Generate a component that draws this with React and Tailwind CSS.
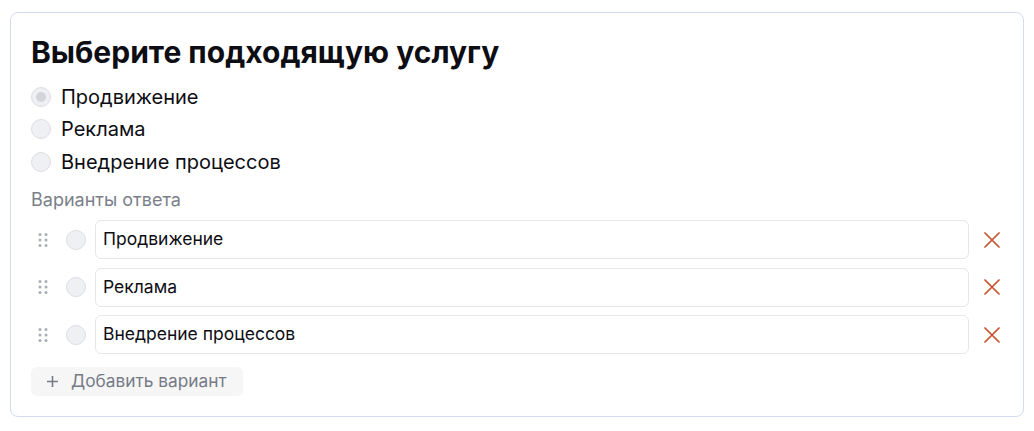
const options = ['Продвижение', 'Реклама', 'Внедрение процессов'];

const DragHandle = () => (
  <svg width="10" height="16" viewBox="0 0 10 16" className="text-[#a9adb5]" fill="currentColor">
    <circle cx="2" cy="2.5" r="1.5" />
    <circle cx="8" cy="2.5" r="1.5" />
    <circle cx="2" cy="8" r="1.5" />
    <circle cx="8" cy="8" r="1.5" />
    <circle cx="2" cy="13.5" r="1.5" />
    <circle cx="8" cy="13.5" r="1.5" />
  </svg>
);

const Radio = ({ checked }) => (
  <span className="w-5 h-5 rounded-full border border-[#dcdee3] bg-[#eff0f3] flex items-center justify-center shrink-0">
    {checked && <span className="w-[10px] h-[10px] rounded-full bg-[#d3d5db]" />}
  </span>
);

export default function App() {
  return (
    <div className="min-h-screen bg-white p-[10px] pt-[12px] font-['Inter',sans-serif]">
      <div className="border border-[#d5dbf3] rounded-lg px-5 pt-[21px] pb-5">
        {/* Title */}
        <h2 className="text-[30px] leading-[36px] font-bold text-[#0d0d14]">
          Выберите подходящую услугу
        </h2>

        {/* Preview */}
        <div className="mt-[10.5px] flex flex-col">
          {options.map((o, i) => (
            <label key={o} className="flex items-center gap-[10px] h-[32.5px] text-[20px] leading-[32.5px] text-[#0d0d14]">
              <Radio checked={i === 0} />
              {o}
            </label>
          ))}
        </div>

        {/* Editor */}
        <div className="mt-[11.5px] text-[18px] leading-5 text-[#7b7f8a]">Варианты ответа</div>
        <div className="mt-[10.5px] flex flex-col gap-[8.5px]">
          {options.map((o) => (
            <div key={o} className="flex items-center">
              <span className="w-6 flex justify-center">
                <DragHandle />
              </span>
              <span className="ml-[11px]">
                <Radio />
              </span>
              <div className="ml-[9px] flex-1 h-[39px] border border-[#e6e7ea] rounded-md px-[7px] flex items-center text-[17.5px] text-[#0d0d14]">
                {o}
              </div>
              <button className="ml-[12px] w-[22px] flex justify-center text-[#c4522c]">
                <svg width="16" height="16" viewBox="0 0 16 16" fill="none" stroke="currentColor" strokeWidth="1.7" strokeLinecap="round">
                  <path d="M1 1l14 14M15 1L1 15" />
                </svg>
              </button>
            </div>
          ))}
        </div>

        <button className="mt-[12.5px] h-[29px] px-4 rounded-md bg-[#f6f6f7] flex items-center gap-[13px] text-[17.3px] text-[#777b86]">
          <svg width="11" height="11" viewBox="0 0 11 11" stroke="currentColor" strokeWidth="1.6">
            <path d="M5.5 0v11M0 5.5h11" />
          </svg>
          Добавить вариант
        </button>
      </div>
    </div>
  );
}
